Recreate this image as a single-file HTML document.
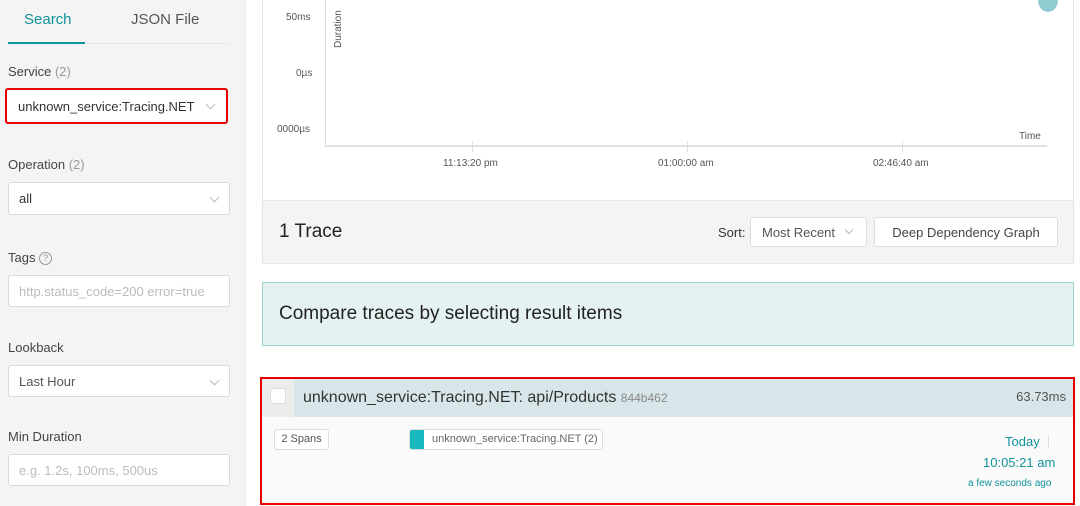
<!DOCTYPE html>
<html><head><meta charset="utf-8"><style>
*{box-sizing:border-box;margin:0;padding:0}
body{width:1080px;height:506px;overflow:hidden;background:#fff;font-family:"Liberation Sans",sans-serif;position:relative;color:#333}
.side{position:absolute;left:0;top:0;width:246px;height:506px;background:#f4f4f4;border-right:1px solid #e8e8e8}
.tab{position:absolute;top:11px;font-size:15px}
.lbl{position:absolute;left:8px;font-size:13px;color:#444}
.lbl span{color:#999}
.inp{position:absolute;left:8px;width:222px;height:32px;background:#fff;border:1px solid #d9d9d9;border-radius:3px;font-size:13px;padding:0 10px;line-height:32px;color:#333}
.ph{color:#bbb}
.chev{position:absolute;right:11px;top:11px;width:7px;height:7px;border-right:1px solid #bbb;border-bottom:1px solid #bbb;transform:rotate(45deg)}
.a{position:absolute;font-size:10px;color:#555}
.tk{position:absolute;top:141px;width:1px;height:11px;background:#ddd}
</style></head><body>
<div class="side">
 <div class="tab" style="left:24px;color:#11939a">Search</div>
 <div class="tab" style="left:131px;color:#555">JSON File</div>
 <div style="position:absolute;left:8px;top:43px;width:222px;height:1px;background:#e8e8e8"></div>
 <div style="position:absolute;left:8px;top:42px;width:77px;height:2px;background:#11939a"></div>
 <div class="lbl" style="top:64px">Service <span>(2)</span></div>
 <div class="inp" style="top:88px;border:2px solid #e60000;line-height:33px;padding-left:11px;width:223px;height:36px;left:5px">unknown_service:Tracing.NET<div class="chev" style="right:12px;top:11px"></div></div>
 <div class="lbl" style="top:157px">Operation <span>(2)</span></div>
 <div class="inp" style="top:182px;height:33px">all<div class="chev"></div></div>
 <div class="lbl" style="top:250px">Tags <span style="display:inline-block;width:13px;height:13px;border:1px solid #999;border-radius:50%;font-size:9px;text-align:center;line-height:11px;vertical-align:middle">?</span></div>
 <div class="inp ph" style="top:275px">http.status_code=200 error=true</div>
 <div class="lbl" style="top:340px">Lookback</div>
 <div class="inp" style="top:365px;color:#555">Last Hour<div class="chev"></div></div>
 <div class="lbl" style="top:429px">Min Duration</div>
 <div class="inp ph" style="top:454px">e.g. 1.2s, 100ms, 500us</div>
</div>

<div style="position:absolute;left:262px;top:-2px;width:812px;height:266px;border:1px solid #e6e6e6;background:#fff"></div>
<div style="position:absolute;left:1038px;top:-12px;width:20px;height:24px;border-radius:50%;background:#8ecbcf"></div>
<div class="a" style="left:286px;top:12px">50ms</div>
<div class="a" style="left:296px;top:68px">0µs</div>
<div class="a" style="left:277px;top:124px">0000µs</div>
<div class="a" style="transform:rotate(-90deg);transform-origin:left top;top:48px;left:333px">Duration</div>
<div style="position:absolute;left:302px;top:17px;width:4px;height:1px;background:#ddd"></div>
<div style="position:absolute;left:302px;top:73px;width:4px;height:1px;background:#ddd"></div>
<div style="position:absolute;left:302px;top:129px;width:4px;height:1px;background:#ddd"></div>
<div style="position:absolute;left:325px;top:0;width:1px;height:146px;background:#ddd"></div>
<div style="position:absolute;left:325px;top:145px;width:722px;height:2px;background:#e2e2e2"></div>
<div class="tk" style="left:472px"></div>
<div class="tk" style="left:687px"></div>
<div class="tk" style="left:902px"></div>
<div class="a" style="left:1019px;top:131px">Time</div>
<div class="a" style="left:443px;top:158px">11:13:20 pm</div>
<div class="a" style="left:658px;top:158px">01:00:00 am</div>
<div class="a" style="left:873px;top:158px">02:46:40 am</div>

<div style="position:absolute;left:263px;top:200px;width:810px;height:63px;background:#f4f4f4;border-top:1px solid #e6e6e6"></div>
<div style="position:absolute;left:279px;top:221px;font-size:19px;color:#222">1 Trace</div>
<div style="position:absolute;left:718px;top:225px;font-size:13px;color:#333">Sort:</div>
<div style="position:absolute;left:750px;top:217px;width:117px;height:30px;background:#fff;border:1px solid #ddd;border-radius:3px;font-size:13px;color:#555;padding:7px 11px">Most Recent<div class="chev" style="right:14px;top:9px;width:6px;height:6px"></div></div>
<div style="position:absolute;left:874px;top:217px;width:184px;height:30px;background:#fff;border:1px solid #ddd;border-radius:3px;font-size:13px;color:#444;padding:7px 0;text-align:center">Deep Dependency Graph</div>

<div style="position:absolute;left:262px;top:282px;width:812px;height:64px;background:#e5f2f2;border:1px solid #9fd3d0"></div>
<div style="position:absolute;left:279px;top:303px;font-size:19px;color:#222">Compare traces by selecting result items</div>

<div style="position:absolute;left:260px;top:377px;width:815px;height:128px;border:2px solid #e60000;background:#fafafa"></div>
<div style="position:absolute;left:262px;top:379px;width:811px;height:38px;background:#d8e6ea"></div>
<div style="position:absolute;left:262px;top:379px;width:32px;height:38px;background:#ececec"></div>
<div style="position:absolute;left:270px;top:388px;width:16px;height:16px;background:#fff;border:1px solid #ddd;border-radius:2px"></div>
<div style="position:absolute;left:303px;top:389px;font-size:16px;color:#333">unknown_service:Tracing.NET: api/Products <span style="font-size:12px;color:#888">844b462</span></div>
<div style="position:absolute;right:14px;top:389px;font-size:13px;color:#555">63.73ms</div>
<div style="position:absolute;left:274px;top:429px;width:55px;height:21px;border:1px solid #ddd;border-radius:3px;background:#fff;font-size:11px;color:#555;text-align:center;line-height:19px">2 Spans</div>
<div style="position:absolute;left:409px;top:429px;width:194px;height:21px;border:1px solid #ddd;border-radius:3px;background:#fff;font-size:11px;color:#666;line-height:19px;padding-left:22px;overflow:hidden">unknown_service:Tracing.NET (2)<div style="position:absolute;left:0;top:0;width:14px;height:20px;background:#17b8be"></div></div>
<div style="position:absolute;left:1005px;top:434px;font-size:13px;color:#11939a">Today</div>
<div style="position:absolute;left:1048px;top:436px;width:1px;height:12px;background:#ddd"></div>
<div style="position:absolute;left:983px;top:455px;font-size:13px;color:#11939a">10:05:21 am</div>
<div style="position:absolute;left:968px;top:478px;font-size:10px;color:#11939a">a few seconds ago</div>
</body></html>
